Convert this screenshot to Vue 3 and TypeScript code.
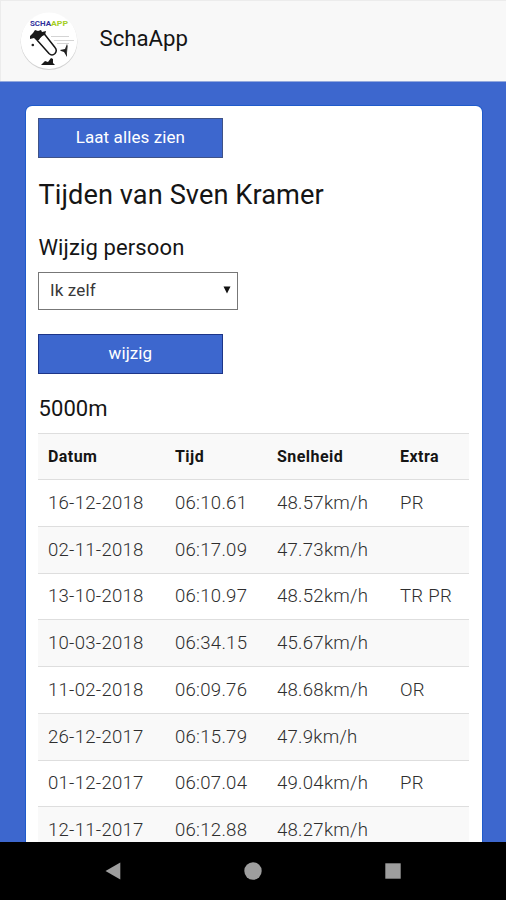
<script setup lang="ts">
import { ref } from 'vue'

interface Result {
  date: string
  time: string
  speed: string
  extra: string
}

const person = ref('Ik zelf')

const results: Result[] = [
  { date: '16-12-2018', time: '06:10.61', speed: '48.57km/h', extra: 'PR' },
  { date: '02-11-2018', time: '06:17.09', speed: '47.73km/h', extra: '' },
  { date: '13-10-2018', time: '06:10.97', speed: '48.52km/h', extra: 'TR PR' },
  { date: '10-03-2018', time: '06:34.15', speed: '45.67km/h', extra: '' },
  { date: '11-02-2018', time: '06:09.76', speed: '48.68km/h', extra: 'OR' },
  { date: '26-12-2017', time: '06:15.79', speed: '47.9km/h', extra: '' },
  { date: '01-12-2017', time: '06:07.04', speed: '49.04km/h', extra: 'PR' },
  { date: '12-11-2017', time: '06:12.88', speed: '48.27km/h', extra: '' },
]
</script>

<template>
  <div class="screen">
    <header class="topbar">
      <svg class="logo" viewBox="0 0 60 60" aria-hidden="true">
        <circle cx="31" cy="30.7" r="28.4" fill="#d2d2d2" />
        <circle cx="31" cy="29.8" r="28.2" fill="#fff" />
        <text x="12" y="15.2" class="logo-text" textLength="21" lengthAdjust="spacingAndGlyphs" fill="#30309c">SCHA</text>
        <text x="33" y="15.2" class="logo-text" textLength="17" lengthAdjust="spacingAndGlyphs" fill="#a5cf25">APP</text>
        <path d="M33 25.500h18M36 29.500h20M39 32.500h12" stroke="#c9c9c9" stroke-width=".8" fill="none" />
        <path d="M19 29l12 13.500q3 3 6 0 2.500-3 0-6L26 22.500z" fill="#fff" stroke="#151515" stroke-width="1.5" stroke-linejoin="round" />
        <path d="M12 25l3-3 2-3 3 1 3-1 1 2 4-1-1 4-4 1-2 4-3 0-2-2-4 1z" fill="#181818" />
        <circle cx="14.8" cy="34" r="1.300" fill="#222" />
        <path d="M42 39l5-1 2-5 0 13-3-5-3-1z" fill="#202020" />
        <path d="M49 33l1 2-1.500 10z" fill="#777" />
        <path d="M23 54l4-4 3 1 3-4 2 1 0 4 2 2z" fill="#181818" />
      </svg>
      <span class="title">SchaApp</span>
    </header>

    <main class="content">
      <section class="card">
        <button class="btn" type="button">Laat alles zien</button>
        <h1>Tijden van Sven Kramer</h1>
        <h2>Wijzig persoon</h2>
        <div class="select" role="combobox">
          <span>{{ person }}</span>
          <svg width="8" height="8" viewBox="0 0 8 8"><path d="M.5.5h7L4 7.5z" fill="#111" /></svg>
        </div>
        <button class="btn dark" type="button">wijzig</button>
        <h2 class="distance">5000m</h2>
        <table>
          <colgroup>
            <col class="c-date" /><col class="c-time" /><col class="c-speed" /><col />
          </colgroup>
          <thead>
            <tr><th>Datum</th><th>Tijd</th><th>Snelheid</th><th>Extra</th></tr>
          </thead>
          <tbody>
            <tr v-for="r in results" :key="r.date">
              <td>{{ r.date }}</td>
              <td>{{ r.time }}</td>
              <td>{{ r.speed }}</td>
              <td>{{ r.extra }}</td>
            </tr>
          </tbody>
        </table>
      </section>
    </main>

    <nav class="navbar">
      <svg width="16" height="18" viewBox="0 0 16 18"><path d="M15.3.5v17L.5 9z" fill="#9e9e9e" /></svg>
      <svg width="18" height="18" viewBox="0 0 18 18"><circle cx="9" cy="9" r="8.7" fill="#9e9e9e" /></svg>
      <svg width="16" height="16" viewBox="0 0 16 16"><path d="M.3.3h15.4v15.4H.3z" fill="#9e9e9e" /></svg>
    </nav>
  </div>
</template>

<style>
body {
  margin: 0;
  overflow: hidden;
}
</style>

<style scoped>
.screen {
  display: flex;
  flex-direction: column;
  width: 506px;
  height: 900px;
  overflow: hidden;
  box-sizing: border-box;
  background: #3d67ce;
  color: #151515;
  font-family: Roboto, sans-serif;
}
.topbar {
  flex: none;
  display: flex;
  align-items: flex-start;
  height: 82px;
  padding: 11px 0 0 18px;
  box-sizing: border-box;
  background: #f8f8f8;
  box-shadow: inset 1px 1px 0 #ececec;
  border-bottom: 1px solid #94a9dd;
}
.logo {
  flex: none;
  width: 60px;
  height: 60px;
}
.logo-text {
  font: 700 8px Roboto, sans-serif;
}
.title {
  margin-left: 21.5px;
  font-size: 22.2px;
  line-height: 28px;
  padding-top: 13px;
}
.content {
  flex: 1;
  min-height: 0;
  overflow: hidden;
  padding: 24px 24px 0 26px;
}
.card {
  box-sizing: border-box;
  height: 800px;
  padding: 12px 12.4px 0;
  background: #fff;
  border-radius: 6px;
  box-shadow: 0 0 0 1px #1f5bcb;
}
.btn {
  display: block;
  width: 185px;
  height: 40px;
  padding: 0 1px 2px 0;
  box-sizing: border-box;
  border: 1px solid #3f5287;
  border-radius: 0;
  background: #3d67ce;
  color: #fff;
  font: 17px Roboto, sans-serif;
  letter-spacing: 0.1px;
}
.btn.dark {
  border-color: #1d3588;
}
h1 {
  margin: 21px 0 0;
  font-size: 27.2px;
  font-weight: 400;
  line-height: 32px;
  letter-spacing: 0.08px;
}
h2 {
  margin: 23px 0 0;
  font-size: 22px;
  font-weight: 400;
  line-height: 28px;
  letter-spacing: 0.13px;
}
.select {
  display: flex;
  align-items: center;
  justify-content: space-between;
  width: 200px;
  height: 38px;
  margin: 10px 0 24px;
  padding: 0 6px 2px 10.500px;
  box-sizing: border-box;
  border: 1px solid #777;
  color: #383838;
  font-size: 17px;
  letter-spacing: 0.15px;
}
h2.distance {
  margin: 21px 0 10px;
}
table {
  width: 431px;
  table-layout: fixed;
  border-collapse: separate;
  border-spacing: 0;
}
.c-date {
  width: 127px;
}
.c-time {
  width: 102px;
}
.c-speed {
  width: 123px;
}
th,
td {
  height: 46.75px;
  padding: 0 0 0 9.6px;
  box-sizing: border-box;
  border-top: 1px solid #dedede;
  text-align: left;
  white-space: nowrap;
}
th {
  height: 46px;
  padding-bottom: 1px;
  font-size: 16px;
  font-weight: 700;
  letter-spacing: 0.45px;
}
td {
  color: #2e2e2e;
  font-size: 18.6px;
  font-weight: 300;
  letter-spacing: 0.25px;
}
thead tr,
tbody tr:nth-child(even) {
  background: #f9f9f9;
}
.navbar {
  flex: none;
  display: flex;
  justify-content: space-between;
  align-items: center;
  height: 58px;
  padding: 0 105px;
  box-sizing: border-box;
  background: #000;
}
</style>
